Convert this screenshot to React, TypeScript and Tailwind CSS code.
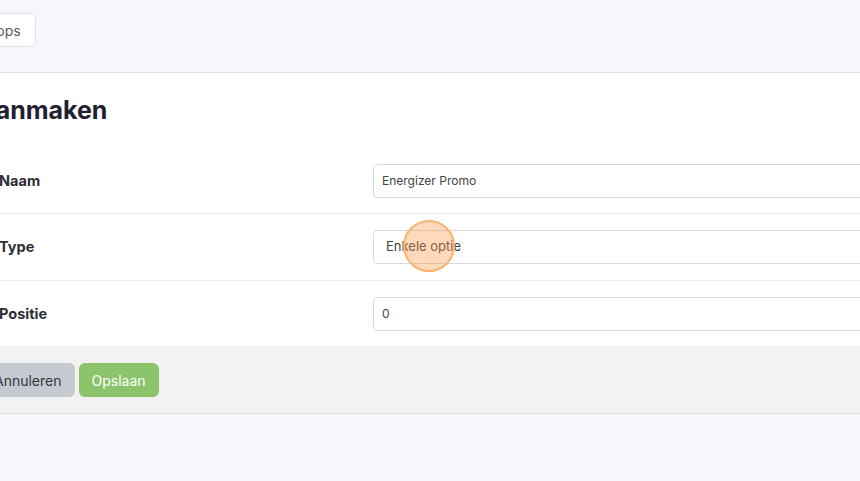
import React from 'react';

const font = { fontFamily: 'Inter, "Noto Sans", sans-serif' };

function Row({ label, children, h }: { label: string; children: React.ReactNode; h: string }) {
  return (
    <div className={`flex items-center border-b border-[#ececec] pl-[39px] ${h}`}>
      <div className="w-[374px] text-[14.5px] font-bold text-[#2b2e33]">{label}</div>
      <div className="flex-1">{children}</div>
    </div>
  );
}

export default function App() {
  return (
    <div className="relative h-[481px] w-[860px] overflow-hidden bg-[#f6f7fa]" style={font}>
      <div className="-ml-[40px] w-[1100px]">
        {/* Top bar */}
        <div className="flex h-[73px] items-start border-b border-[#dcdfe3] pl-[4px] pt-[13px]">
          <button className="h-[34px] rounded-md border border-[#dfe1e5] bg-white px-[14px] text-[14px] text-[#555a60]">
            Shops
          </button>
        </div>

        {/* Card */}
        <div className="bg-white">
          <div className="flex h-[75px] items-center pl-[37px] pt-[1px]">
            <h1 className="-ml-[159px] text-[25px] font-bold text-[#1f2130]">Optiegroep aanmaken</h1>
          </div>

          <Row label="Naam" h="h-[66px]">
            <input
              readOnly
              value="Energizer Promo"
              className="h-[34px] w-full rounded border border-[#d6d9dd] bg-white pl-[8px] text-[12px] text-[#444] outline-none"
            />
          </Row>
          <Row label="Type" h="h-[67px]">
            <div className="flex h-[34px] w-full items-center rounded border border-[#d6d9dd] bg-white pl-[12px] text-[13px] text-[#444]">
              Enkele optie
            </div>
          </Row>
          <Row label="Positie" h="h-[66px]">
            <input
              readOnly
              value="0"
              className="h-[34px] w-full rounded border border-[#d6d9dd] bg-white pl-[8px] text-[12px] text-[#444] outline-none"
            />
          </Row>

          {/* Footer */}
          <div className="flex h-[67px] items-center gap-[4px] border-b border-[#dfe1e5] bg-[#f2f2f2] pl-[21px]">
            <button className="h-[34px] rounded-md bg-[#c4cad0] px-[13px] text-[14px] text-[#33373c]">
              Annuleren
            </button>
            <button className="h-[34px] rounded-md bg-[#8bc46a] px-[13px] text-[14px] text-white">Opslaan</button>
          </div>
        </div>
      </div>

      {/* Click indicator */}
      <div className="absolute left-[403px] top-[220px] h-[52px] w-[52px] rounded-full border-2 border-[#f8b36f] bg-[#fb923c]/35" />
    </div>
  );
}
